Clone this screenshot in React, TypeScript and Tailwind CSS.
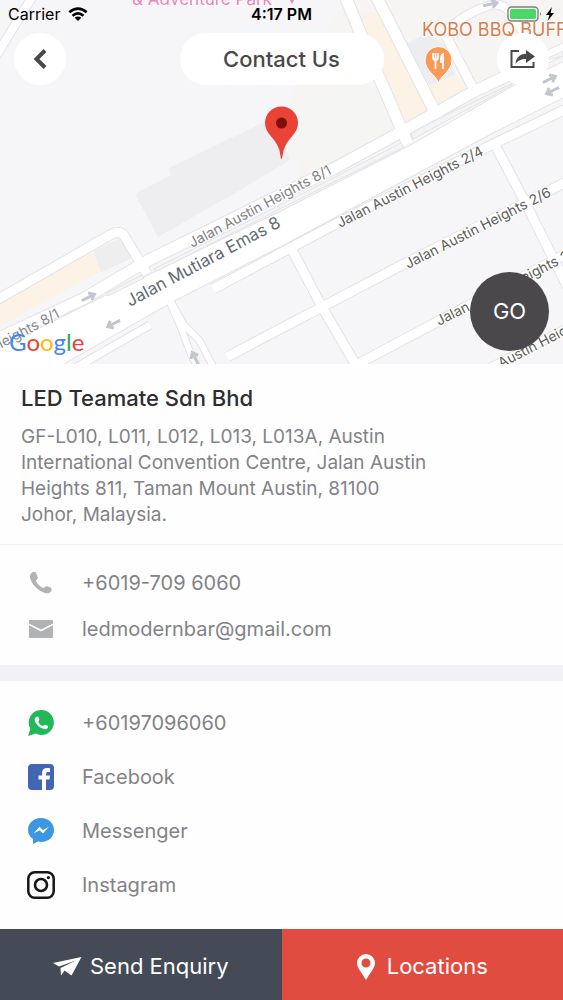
import type { ReactNode } from "react";

const ROADS = [
  { d: "M-4 56 L34 -6", w: 8 },
  { d: "M-5 301 L110 235 Q120 229 125 237 L147 274", w: 9 },
  { d: "M345 -4 L376 70 L408 144", w: 11 },
  { d: "M376 -4 L407 57 L438 118", w: 11 },
  { d: "M446 36 L475 92", w: 9 },
  { d: "M446 30 Q468 12 488 6 Q504 0 514 18 L540 60", w: 8 },
  { d: "M75 368 L150 325", w: 7 },
  { d: "M168 298 L180 325 L190 352 L198 368", w: 6 },
  { d: "M170 300 L184 325 L199 340 L214 368", w: 6 },
  { d: "M570 107 L483 149 L330 227 L213 289", w: 9 },
  { d: "M290 246 L322 307 L360 372", w: 9 },
  { d: "M570 180 L400 266 L322 307 L227 357", w: 9 },
  { d: "M570 252 L435 323 L350 368", w: 9 },
  { d: "M570 327 L486 370", w: 8 },
  { d: "M494 143 L524 200 L568 288", w: 9 },
  { d: "M-5 340 L83 299 L147 261 L333 169 L403 131 L473 92 L570 46", w: 11 },
];

const MAIN_ROAD =
  "M-5 351 L107 295 L145 277 L157 271 L282 211 L408 147 L517 84 L570 59 L570 94 L490 134 L281 246 L173 301 L63 364 L-5 400 Z";

const STREETS = [
  { text: "Jalan Austin Heights 8/1", x: 192, y: 248, angle: -28, size: 14, fill: "#7f7f84" },
  { text: "Jalan Mutiara Emas 8", x: 130, y: 307, angle: -28, size: 17, fill: "#626b72" },
  { text: "Jalan Austin Heights 2/4", x: 340, y: 228, angle: -27, size: 14, fill: "#5c5c56" },
  { text: "Jalan Austin Heights 2/6", x: 408, y: 269, angle: -27, size: 14, fill: "#5c5c56" },
  { text: "Jalan Austin Heights 2/8", x: 439, y: 326, angle: -27, size: 14, fill: "#5c5c56" },
  { text: "Jalan Austin Heights 2/10", x: 466, y: 386, angle: -27, size: 14, fill: "#5c5c56" },
];

const ARROWS = [
  { x: 89, y: 297, angle: -27 },
  { x: 113, y: 324, angle: 153 },
  { x: 195, y: 358, angle: -117 },
  { x: 491, y: 4, angle: -12 },
  { x: 550, y: 79, angle: -27 },
  { x: 552, y: 91, angle: 153 },
];

function CityMap() {
  return (
    <svg
      viewBox="0 0 563 364"
      preserveAspectRatio="xMidYMid slice"
      className="block h-[364px] w-full"
      fontFamily="Inter, sans-serif"
      role="img"
      aria-label="Map of Jalan Austin Heights"
    >
      <rect width="563" height="364" fill="#f6f5f8" />

      {/* blocks and buildings */}
      <path d="M290 95 L345 0 L563 0 L563 60 L300 185 Z" fill="#f6f5f3" />
      <path d="M135 194 L171 175 L169 168 L262 123 L275 118 L290 160 L240 190 L158 237 Z" fill="#eeeef0" />
      <path d="M275 118 L310 100 L372 75 L398 126 L330 161 L290 160 Z" fill="#f5f5f3" />
      <path d="M354 18 L378 10 L430 112 L404 122 L380 66 Z" fill="#fdf2e6" />
      <path d="M406 44 L425 34 L445 45 L455 74 L430 86 Z" fill="#ecedf0" />
      <path d="M428 86 L455 76 L468 90 L439 107 Z" fill="#fdf2e6" />
      <path d="M0 303 L92 252 L101 271 L0 326 Z" fill="#fdf2e6" />
      <path d="M93 251 L119 239 L133 258 L101 272 Z" fill="#eeeeef" />

      {/* casings go under every road so crossings stay open */}
      <g fill="none" stroke="#e3e3e7" strokeLinejoin="round">
        {ROADS.map((road) => (
          <path key={road.d} d={road.d} strokeWidth={road.w + 2} />
        ))}
        <path d={MAIN_ROAD} strokeWidth="2" />
      </g>
      <g fill="none" stroke="#fff" strokeLinejoin="round">
        {ROADS.map((road) => (
          <path key={road.d} d={road.d} strokeWidth={road.w} />
        ))}
      </g>
      <path d={MAIN_ROAD} fill="#fff" />
      <g fill="#f5f4f4" stroke="#e3e3e7">
        <path d="M107 293 L142 275 L144 278 L108 296 Z" />
        <path d="M154 269 L335 177 L401 143 L404 147 L282 208 L157 271 Z" />
        <path d="M411 133 L440 118 L515 82 L505 89 L413 139 Z" />
        <path d="M540 62 L563 51 L563 56 Z" />
      </g>

      {ARROWS.map((a) => (
        <path
          key={`${a.x}-${a.y}`}
          d="M-8 0 H5 M1 -4 L6 0 L1 4"
          transform={`translate(${a.x} ${a.y}) rotate(${a.angle})`}
          fill="none"
          stroke="#c3c6d0"
          strokeWidth="3"
        />
      ))}

      <g stroke="#fff" strokeWidth="2" paintOrder="stroke">
        {STREETS.map((s) => (
          <text key={s.text} transform={`translate(${s.x} ${s.y}) rotate(${s.angle})`} fontSize={s.size} fill={s.fill}>
            {s.text}
          </text>
        ))}
        <text transform="translate(-45 373) rotate(-28)" fontSize="14" fill="#85858a">
          Austin Heights 8/1
        </text>
        <text x="132" y="5" fontSize="17" fill="#ee82b6">
          &amp; Adventure Park
        </text>
        <text x="422" y="36" fontSize="18" fill="#d97b4c">
          KOBO BBQ BUFFET
        </text>
      </g>
      <path d="M290 0 h4 l-2 4 z" fill="#ee82b6" />

      {/* restaurant pin */}
      <path
        d="M438.500 83 C436 75 425 71 425 60 A13.500 13.500 0 0 1 452 60 C452 71 441 75 438.500 83 Z"
        fill="#fb9a57"
        stroke="#fff"
      />
      <path
        d="M433 53 V57 Q433 60 435.500 60 Q438 60 438 57 V53 M435.500 53 V69 M443 69 V54 Q440.500 55 441 62 H443"
        fill="none"
        stroke="#fff"
        strokeWidth="1.800"
      />

      {/* place marker */}
      <path
        d="M281.500 159 C280.500 159 280.600 154 279 149 C275 137 265 134 265 123 A16.500 16.500 0 0 1 298 123 C298 134 288 137 284 149 C282.400 154 282.500 159 281.500 159 Z"
        fill="#ea4335"
      />
      <circle cx="281.500" cy="123" r="5.500" fill="#7e0f0c" />
    </svg>
  );
}

const GOOGLE = [
  { letter: "G", color: "text-[#4285f4]" },
  { letter: "o", color: "text-[#ea4335]" },
  { letter: "o", color: "text-[#fbbc05]" },
  { letter: "g", color: "text-[#4285f4]" },
  { letter: "l", color: "text-[#34a853]" },
  { letter: "e", color: "text-[#ea4335]" },
];

function StatusBar() {
  return (
    <div className="grid h-7 grid-cols-3 items-center px-2 text-base text-black">
      <span className="flex items-center gap-2">
        Carrier
        <svg width="20" height="14" viewBox="0 0 20 14" fill="none" stroke="#000" strokeWidth="2.600" aria-hidden="true">
          <path d="M1.300 5.300 Q10 -2 18.700 5.300" />
          <path d="M4.500 8.700 Q10 4.200 15.500 8.700" />
          <path d="M10 14 L6.700 10.800 Q10 8.300 13.300 10.800 Z" fill="#000" stroke="none" />
        </svg>
      </span>
      <span className="text-center font-semibold">4:17 PM</span>
      <svg className="justify-self-end" width="48" height="16" viewBox="0 0 48 16" aria-label="Battery charging">
        <rect x="1" y="1" width="30" height="14" rx="3.500" fill="#fff" stroke="#7d807d" strokeWidth="1.400" />
        <rect x="3" y="3" width="26" height="10" rx="1.500" fill="#4bd763" />
        <path d="M33 6 Q35 8 33 10 Z" fill="#7d807d" />
        <path d="M45 1 L39 9 H42.500 L40.500 15 L47 7 H43.500 Z" fill="#000" />
      </svg>
    </div>
  );
}

function PhoneIcon() {
  return (
    <svg width="24" height="24" viewBox="0 0 24 24" fill="#b1b2b4" aria-hidden="true">
      <path d="M3 1.500 C5 0 7 1 7.500 3 L8.700 6.500 C9 8.500 6.800 8.800 7 10 C8.300 13 11 15.800 14 17 C15.500 17.300 16 14.800 18 15.200 L21.500 16.500 C23.500 17.500 23 19.500 21.500 21 C19.500 23 16 22.500 12.500 20.500 C7 17.500 2 12 1 6.500 C0.800 4.500 1.500 2.500 3 1.500 Z" />
    </svg>
  );
}

function MailIcon() {
  return (
    <svg width="24" height="18" viewBox="0 0 24 18" fill="#b1b2b4" aria-hidden="true">
      <path d="M0 1 Q0 0 1 0 H23 Q24 0 24 1 V3.500 L12 9.500 L0 3.500 Z" />
      <path d="M0 5.300 L12 11.500 L24 5.300 V17 Q24 18 23 18 H1 Q0 18 0 17 Z" />
    </svg>
  );
}

function WhatsAppIcon() {
  return (
    <svg width="26" height="26" viewBox="0 0 26 26" aria-hidden="true">
      <path d="M13.500 0 A12.500 12.500 0 1 1 7.600 23.600 L0 26 L2.400 18.700 A12.500 12.500 0 0 1 13.500 0 Z" fill="#20b858" />
      <path
        d="M8 7 C9 6 10 6.300 10.500 7.300 L11.300 9.300 C11.700 10.500 10.300 11 10.400 11.700 C11 13.800 13 15.500 15 16 C15.800 16 16.300 14.500 17.300 14.800 L19.500 15.800 C20.700 16.500 20 18 19 18.700 C17.500 19.700 14.500 19 12 17.300 C9 15.200 6.500 12 6.700 9 C6.800 8.200 7.300 7.600 8 7 Z"
        fill="#fff"
      />
    </svg>
  );
}

function FacebookIcon() {
  return (
    <svg width="26" height="26" viewBox="0 0 26 26" aria-hidden="true">
      <rect width="26" height="26" rx="4" fill="#4267b2" />
      <path d="M14 26 V15.500 H10.500 V11.500 H14 V9 C14 5.800 16 4 19 4 C20.500 4 21.500 4.200 22 4.300 V8 H20 C18.300 8 18 8.800 18 10 V11.500 H22 L21.500 15.500 H18 V26 Z" fill="#fff" />
    </svg>
  );
}

function MessengerIcon() {
  return (
    <svg width="26" height="26" viewBox="0 0 26 26" aria-hidden="true">
      <path d="M13 0 C20.500 0 26 5.300 26 12 C26 19 20.500 24 13 24 C11.800 24 11 23.900 10 23.600 L5 26 V21 C1.800 18.800 0 15.700 0 12 C0 5.300 5.500 0 13 0 Z" fill="#3b97e3" />
      <path d="M5.500 15.500 L11.500 8.700 L14.800 12 L21 8.700 L15 15.500 L11.700 12.300 Z" fill="#fff" />
    </svg>
  );
}

function InstagramIcon() {
  return (
    <svg width="28" height="28" viewBox="0 0 28 28" fill="none" stroke="#161616" aria-hidden="true">
      <rect x="1.300" y="1.300" width="25.400" height="25.400" rx="6.500" strokeWidth="2.500" />
      <circle cx="14" cy="14" r="6" strokeWidth="2.600" />
      <circle cx="21.400" cy="6.600" r="1.600" fill="#161616" stroke="none" />
    </svg>
  );
}

type RowProps = { href: string; icon: ReactNode; label: string };

const CONTACTS: RowProps[] = [
  { href: "tel:+60197096060", icon: <PhoneIcon />, label: "+6019-709 6060" },
  { href: "mailto:ledmodernbar@gmail.com", icon: <MailIcon />, label: "ledmodernbar@gmail.com" },
];

const SOCIALS: RowProps[] = [
  { href: "#whatsapp", icon: <WhatsAppIcon />, label: "+60197096060" },
  { href: "#facebook", icon: <FacebookIcon />, label: "Facebook" },
  { href: "#messenger", icon: <MessengerIcon />, label: "Messenger" },
  { href: "#instagram", icon: <InstagramIcon />, label: "Instagram" },
];

function Row({ href, icon, label }: RowProps) {
  return (
    <a href={href} className="flex h-full items-center gap-[26px] pl-[26px] text-xl text-[#828386]">
      <span className="flex w-[30px] shrink-0 justify-center">{icon}</span>
      {label}
    </a>
  );
}

export default function App() {
  return (
    <div className="flex min-h-screen flex-col bg-[#fefefe] font-['Inter',sans-serif]">
      <header className="relative overflow-hidden">
        <CityMap />
        <div className="absolute inset-x-0 top-0">
          <StatusBar />
          <div className="flex items-center justify-between px-[14px] pt-[5px]">
            <button aria-label="Back" className="flex size-[52px] items-center justify-center rounded-full bg-white">
              <svg width="14" height="20" viewBox="0 0 14 20" fill="none" stroke="#4a484a" strokeWidth="4" aria-hidden="true">
                <path d="M12 1.500 L3.500 10 L12 18.500" />
              </svg>
            </button>
            <h1 className="flex h-[52px] w-[204px] items-center justify-center rounded-full bg-white text-[22px] font-medium text-[#4a484a]">
              Contact Us
            </h1>
            <button aria-label="Share" className="flex size-[52px] items-center justify-center rounded-full bg-white">
              <svg width="26" height="20" viewBox="0 0 26 20" aria-hidden="true">
                <path d="M9 2 H1.500 V18 H23.500 V13" fill="none" stroke="#4a484a" strokeWidth="2" />
                <path d="M16 1 L25 7.500 L16 14 V10 C11 10 8 11.500 5.500 15 C6 8.500 10 5 16 4.800 Z" fill="#4a484a" />
              </svg>
            </button>
          </div>
        </div>
        <div
          className="absolute bottom-2 left-[9px] font-['Lato',sans-serif] text-2xl leading-7"
          aria-label="Google"
        >
          {GOOGLE.map((g, i) => (
            <span key={i} className={g.color}>
              {g.letter}
            </span>
          ))}
        </div>
        <button className="absolute right-[14px] bottom-[13px] size-[79px] rounded-full bg-[#4a484a] text-[22px] text-white">
          GO
        </button>
      </header>

      <main className="flex flex-1 flex-col">
        <section className="border-b border-[#f1f1f3] px-[21px] pt-5 pb-4">
          <h2 className="text-[22px] leading-7 font-medium text-[#2d2d2f]">LED Teamate Sdn Bhd</h2>
          <address className="mt-3 text-[19px] leading-[26px] text-[#828386] not-italic">
            GF-L010, L011, L012, L013, L013A, Austin
            <br />
            International Convention Centre, Jalan Austin
            <br />
            Heights 811, Taman Mount Austin, 81100
            <br />
            Johor, Malaysia.
          </address>
        </section>

        <ul className="border-b-16 border-[#f2f1f3] pt-[15px] pb-[13px]">
          {CONTACTS.map((c) => (
            <li key={c.href} className="h-[46px]">
              <Row {...c} />
            </li>
          ))}
        </ul>

        <ul className="pt-[15px] pb-4">
          {SOCIALS.map((s) => (
            <li key={s.href} className="h-[54px]">
              <Row {...s} />
            </li>
          ))}
        </ul>
      </main>

      <footer className="grid h-[71px] grid-cols-2 text-[22px] text-white">
        <button className="flex items-center justify-center gap-2 bg-[#444b56] pt-1">
          <svg width="29" height="20" viewBox="0 0 29 20" fill="#fff" aria-hidden="true">
            <path d="M28.500 0 L0 6 L6 9.500 L23 3.500 L7.500 11 L8 18.500 L11.500 13.500 L18.500 18.500 Z" />
          </svg>
          Send Enquiry
        </button>
        <button className="flex items-center justify-center gap-3 bg-[#e14c41] pt-1">
          <svg width="18" height="26" viewBox="0 0 18 26" fill="#fff" fillRule="evenodd" aria-hidden="true">
            <path d="M9 0 A9 9 0 0 1 18 9 C18 14 13 19 9 26 C5 19 0 14 0 9 A9 9 0 0 1 9 0 Z M9 4.500 A4.500 4.500 0 1 0 9 13.500 A4.500 4.500 0 1 0 9 4.500 Z" />
          </svg>
          Locations
        </button>
      </footer>
    </div>
  );
}
